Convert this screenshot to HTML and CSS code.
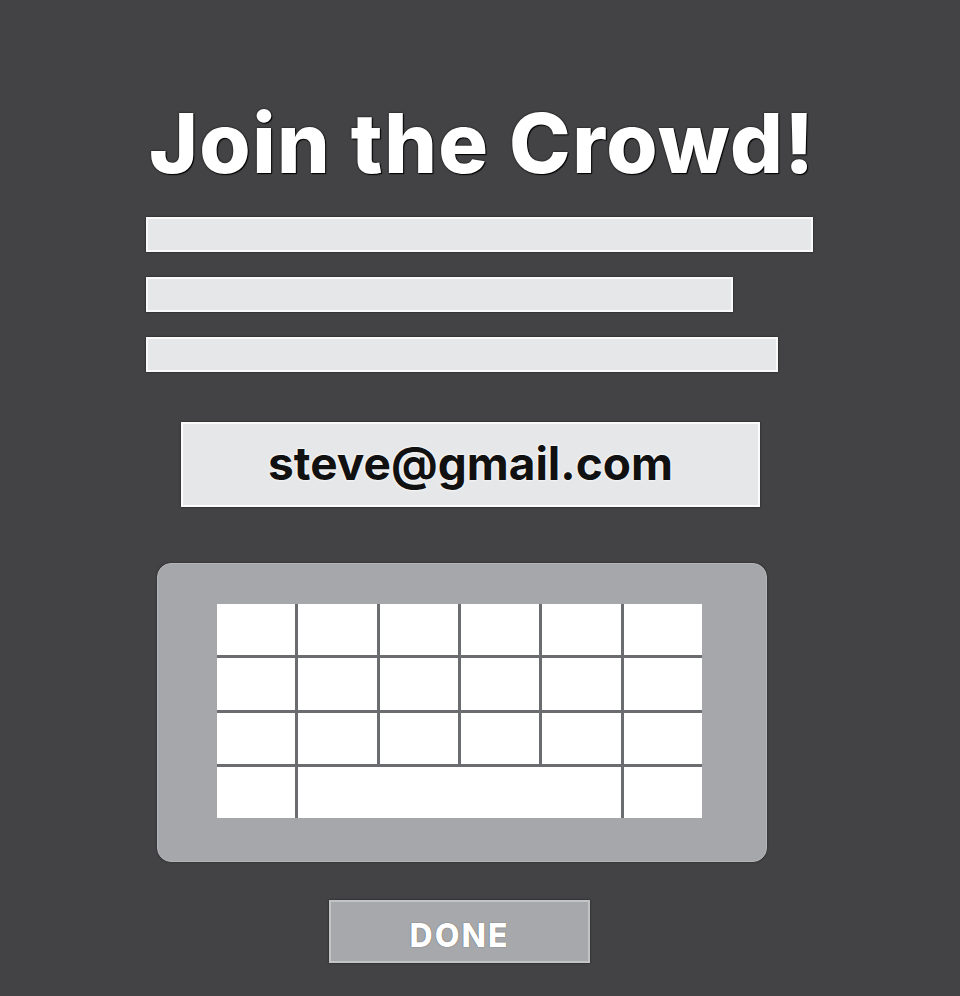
FILE: index.html
```html
<!DOCTYPE html>
<html>
<head>
<meta charset="utf-8">
<link rel="stylesheet" href="styles.css">
</head>
<body>
<main class="page">
  <h1 class="title">Join the Crowd!</h1>
  <div class="bars">
    <div class="bar bar-1"></div>
    <div class="bar bar-2"></div>
    <div class="bar bar-3"></div>
  </div>
  <div class="email">steve@gmail.com</div>
  <div class="keyboard">
    <div class="keys">
      <div class="key"></div><div class="key"></div><div class="key"></div><div class="key"></div><div class="key"></div><div class="key"></div>
      <div class="key"></div><div class="key"></div><div class="key"></div><div class="key"></div><div class="key"></div><div class="key"></div>
      <div class="key"></div><div class="key"></div><div class="key"></div><div class="key"></div><div class="key"></div><div class="key"></div>
      <div class="key"></div><div class="key space"></div><div class="key"></div>
    </div>
  </div>
  <div class="done">DONE</div>
</main>
</body>
</html>
```
FILE: styles.css
```css
html, body {
  margin: 0;
  padding: 0;
  background: #434345;
}
.page {
  width: 960px;
  height: 996px;
  box-sizing: border-box;
  padding: 0 0 0 146px;
  display: flex;
  flex-direction: column;
  align-items: flex-start;
  font-family: "Inter", "Liberation Sans", sans-serif;
}
.title {
  margin: 95px 0 0 3px;
  height: 96px;
  font-size: 83px;
  line-height: 96px;
  font-weight: 800;
  color: #ffffff;
  letter-spacing: 1.4px;
  text-shadow: 0 0 2px #000, 1px 1px 1px #000;
  white-space: nowrap;
}
.bars {
  margin-top: 26px;
  display: flex;
  flex-direction: column;
  gap: 25px;
}
.bar {
  height: 35px;
  box-sizing: border-box;
  background: #e6e7e8;
  border: 2px solid #f9f9f9;
  box-shadow: 0 0 2px #1e1e1e;
}
.bar-1 { width: 667px; }
.bar-2 { width: 587px; }
.bar-3 { width: 632px; }
.email {
  margin: 50px 0 0 35px;
  width: 579px;
  height: 85px;
  box-sizing: border-box;
  background: #e6e7e8;
  border: 2px solid #fbfbfb;
  box-shadow: 0 0 2px #1e1e1e;
  display: flex;
  align-items: center;
  justify-content: center;
  font-size: 46px;
  font-weight: 700;
  color: #111;
  text-shadow: 0 0 3px #fff, 0 0 2px #fff;
  padding: 0 0 4px 0;
}
.keyboard {
  margin: 56px 0 0 11px;
  width: 610px;
  height: 299px;
  box-sizing: border-box;
  background: #a6a7aa;
  border-radius: 14px;
  border: 1px solid #b4b5b8;
  box-shadow: 0 0 2px #222;
  padding: 40px 0 0 59px;
}
.keys {
  width: 485px;
  height: 214px;
  display: grid;
  grid-template-columns: repeat(6, 1fr);
  grid-template-rows: repeat(4, 1fr);
  gap: 3px;
  background: #6b6c6f;
}
.key {
  background: #ffffff;
}
.space {
  grid-column: span 4;
}
.done {
  margin: 38px 0 0 183px;
  width: 261px;
  height: 63px;
  box-sizing: border-box;
  background: #a7a8ab;
  border: 2px solid #c3c4c6;
  box-shadow: 0 0 2px #1e1e1e;
  display: flex;
  align-items: center;
  justify-content: center;
  font-size: 32px;
  font-weight: 800;
  color: #ffffff;
  letter-spacing: 2px;
  padding: 8px 0 0 0;
  text-shadow: 0 0 1px #333;
}
```
